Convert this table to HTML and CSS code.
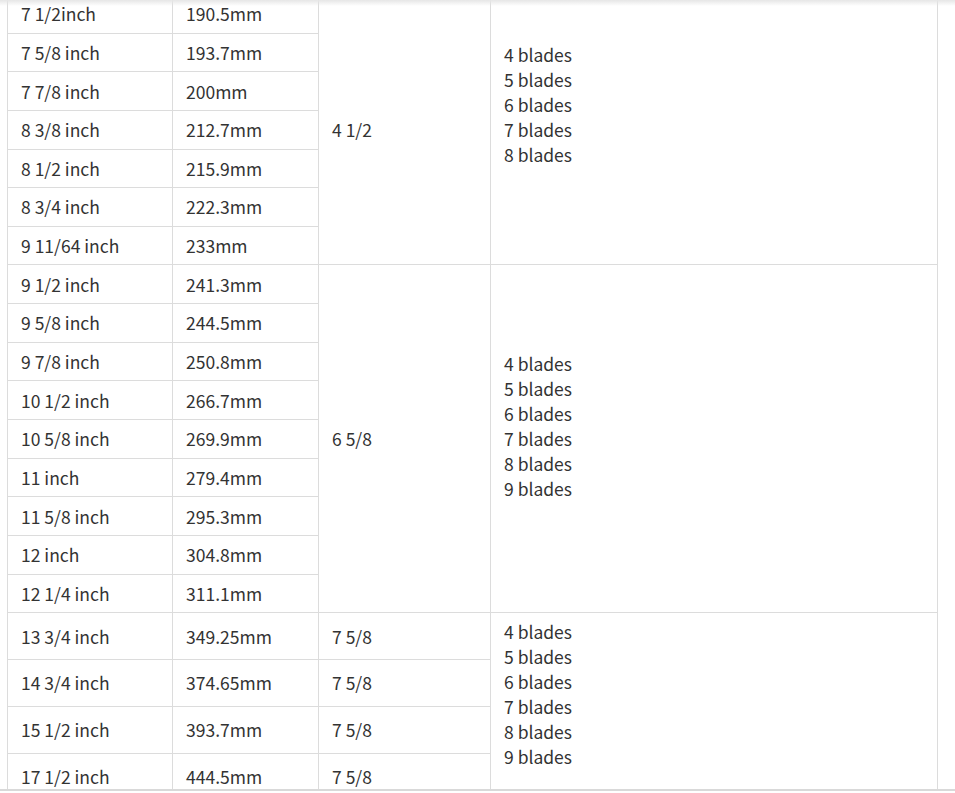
FILE: index.html
```html
<!DOCTYPE html>
<html>
<head>
<meta charset="utf-8">
<link rel="stylesheet" href="styles.css">
</head>
<body>
<div class="wrap">
<table class="spec">
<colgroup><col class="c1"><col class="c2"><col class="c3"><col class="c4"></colgroup>
<tbody>
<tr><td>7 1/2inch</td><td>190.5mm</td><td rowspan="7" class="mid">4 1/2</td><td rowspan="7" class="mid">4 blades<br>5 blades<br>6 blades<br>7 blades<br>8 blades<br><br><br></td></tr>
<tr><td>7 5/8 inch</td><td>193.7mm</td></tr>
<tr><td>7 7/8 inch</td><td>200mm</td></tr>
<tr><td>8 3/8 inch</td><td>212.7mm</td></tr>
<tr><td>8 1/2 inch</td><td>215.9mm</td></tr>
<tr><td>8 3/4 inch</td><td>222.3mm</td></tr>
<tr><td>9 11/64 inch</td><td>233mm</td></tr>
<tr><td>9 1/2 inch</td><td>241.3mm</td><td rowspan="9" class="mid">6 5/8</td><td rowspan="9" class="mid">4 blades<br>5 blades<br>6 blades<br>7 blades<br>8 blades<br>9 blades<br><br></td></tr>
<tr><td>9 5/8 inch</td><td>244.5mm</td></tr>
<tr><td>9 7/8 inch</td><td>250.8mm</td></tr>
<tr><td>10 1/2 inch</td><td>266.7mm</td></tr>
<tr><td>10 5/8 inch</td><td>269.9mm</td></tr>
<tr><td>11 inch</td><td>279.4mm</td></tr>
<tr><td>11 5/8 inch</td><td>295.3mm</td></tr>
<tr><td>12 inch</td><td>304.8mm</td></tr>
<tr><td>12 1/4 inch</td><td>311.1mm</td></tr>
<tr><td>13 3/4 inch</td><td>349.25mm</td><td>7 5/8</td><td rowspan="4" class="top">4 blades<br>5 blades<br>6 blades<br>7 blades<br>8 blades<br>9 blades<br><br></td></tr>
<tr><td>14 3/4 inch</td><td>374.65mm</td><td>7 5/8</td></tr>
<tr><td>15 1/2 inch</td><td>393.7mm</td><td>7 5/8</td></tr>
<tr><td>17 1/2 inch</td><td>444.5mm</td><td>7 5/8</td></tr>
</tbody>
</table>
</div>
</body>
</html>
```

FILE: styles.css
```css
html, body {
  margin: 0;
  padding: 0;
  background: #fff;
}
.wrap {
  position: relative;
  height: 789px;
  overflow: hidden;
  border-bottom: 2px solid #d9d9d9;
  padding-left: 7px;
  box-sizing: content-box;
}
.wrap::before {
  content: "";
  position: absolute;
  left: 0;
  right: 0;
  top: 0;
  height: 6px;
  background: linear-gradient(#e6e6e6, rgba(255,255,255,0));
  z-index: 2;
}
.spec {
  border-collapse: collapse;
  table-layout: fixed;
  width: 931px;
  margin-top: -6px;
  font-family: "Noto Sans CJK SC", "Noto Sans", sans-serif;
  font-size: 17.5px;
  color: #333;
}
.c1 { width: 165px; }
.c2 { width: 146px; }
.c3 { width: 172px; }
.c4 { width: 447px; }
.spec td {
  border: 1px solid #dcdcdc;
  padding: 6.25px 13px 6.4px;
  line-height: 25px;
  vertical-align: middle;
  text-align: left;
}
.spec td.top {
  vertical-align: top;
  padding-top: 5.5px;
  padding-bottom: 5.5px;
}
```
